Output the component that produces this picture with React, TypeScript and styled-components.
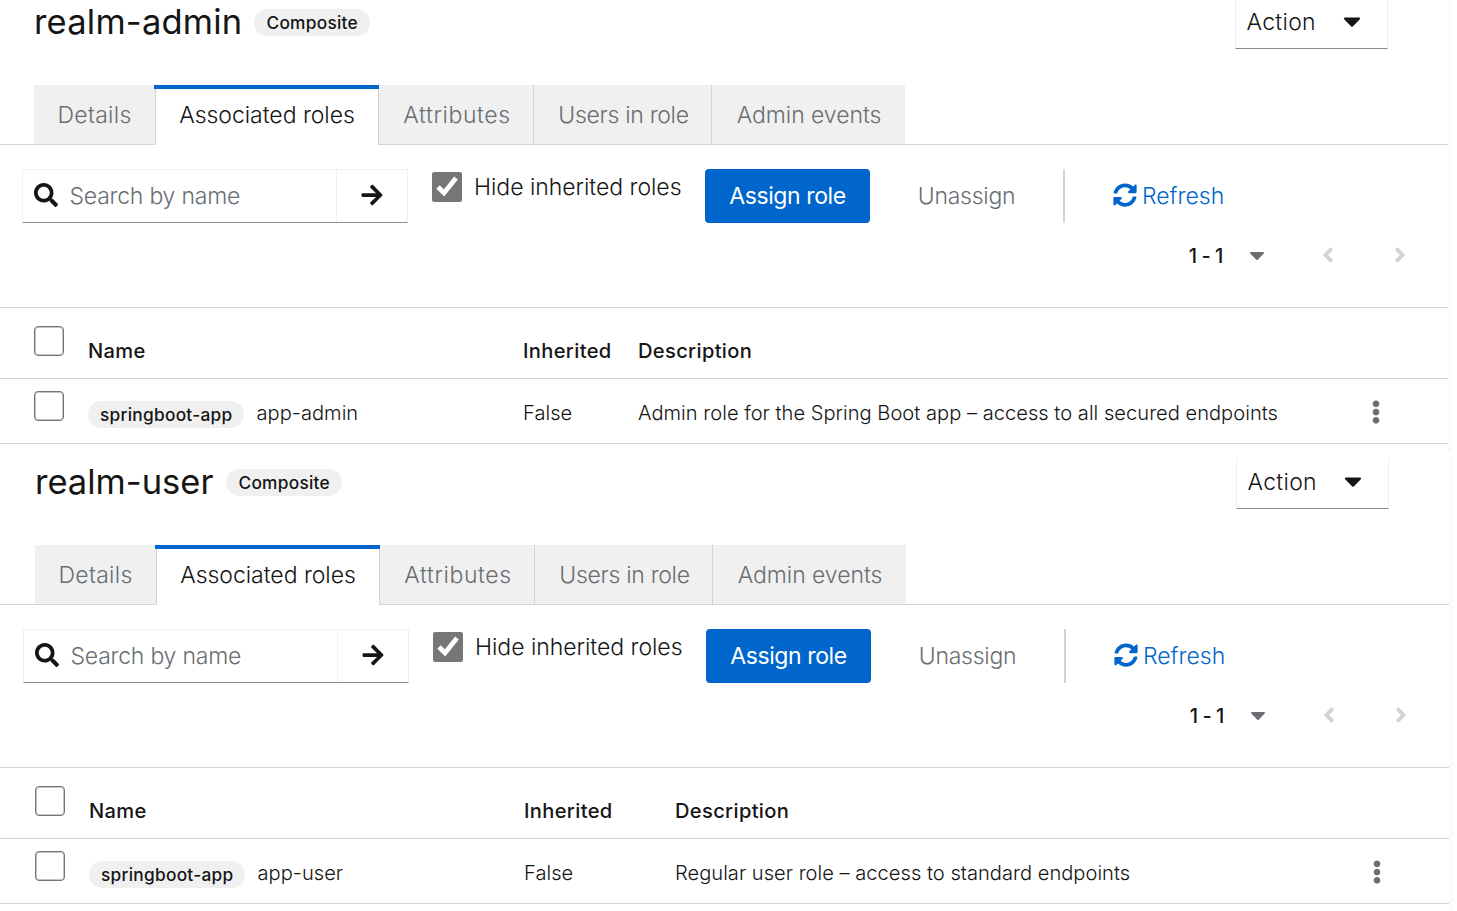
import React from "react";
import styled, { createGlobalStyle } from "styled-components";
import {
  FaAngleLeft,
  FaAngleRight,
  FaArrowRight,
  FaCaretDown,
  FaEllipsisV,
  FaSearch,
  FaSyncAlt,
} from "react-icons/fa";

const GlobalStyle = createGlobalStyle`
  *, *::before, *::after { box-sizing: border-box; }
  body {
    margin: 0;
    background: #fff;
    color: #151515;
    font-family: Inter, "Liberation Sans", sans-serif;
    font-size: 23px;
    font-weight: 300;
    overflow: hidden;
  }
  button {
    font: inherit;
    color: inherit;
    background: none;
    border: 0;
    padding: 0;
    margin: 0;
  }
  svg { display: block; flex: none; }
`;

const Page = styled.div`
  display: flex;
  flex-direction: column;
  gap: 6px;
  width: 1457px;
  height: 911px;
  overflow: hidden;
`;

const Panel = styled.section<{ $inset: number; $height: number }>`
  --inset: ${(p) => p.$inset}px;
  flex: none;
  width: ${(p) => 1452 + p.$inset}px;
  height: ${(p) => p.$height}px;
  border-right: 4px solid #fafafa;
  overflow: hidden;
`;

const Header = styled.header<{ $height: number }>`
  display: flex;
  align-items: flex-end;
  height: ${(p) => p.$height}px;
  padding: 0 60px 0 calc(34px + var(--inset));
  overflow: hidden;
`;

const Title = styled.h1<{ $width: number; $track: number }>`
  margin: 0;
  width: ${(p) => p.$width}px;
  font-size: 34.5px;
  font-weight: 400;
  line-height: 54px;
  letter-spacing: ${(p) => p.$track}px;
  white-space: nowrap;
`;

const Badge = styled.span<{ $width: number }>`
  display: flex;
  align-items: center;
  justify-content: center;
  flex: none;
  width: ${(p) => p.$width}px;
  height: 27px;
  padding-left: 0.5px;
  border-radius: 14px;
  background: #f0f0f0;
  font-size: 17.3px;
  font-weight: 500;
  letter-spacing: 0.27px;
  white-space: nowrap;
`;

const HeaderBadge = styled(Badge)`
  margin-bottom: 13px;
`;

const ActionToggle = styled.button`
  display: flex;
  align-items: center;
  justify-content: space-between;
  width: 153px;
  height: 54px;
  margin-left: auto;
  padding: 0 21px 0 10.5px;
  border: 1px solid #f0f0f0;
  border-bottom-color: #8a8d90;
  letter-spacing: 0.3px;

  svg { margin-bottom: 2px; }
`;

const TabBar = styled.nav`
  display: flex;
  height: 60px;
  margin-top: 36px;

  &::before {
    content: "";
    width: calc(34px + var(--inset));
    border-bottom: 1px solid #d2d2d2;
  }
  &::after {
    content: "";
    flex: 1;
    border-bottom: 1px solid #d2d2d2;
  }
`;

const Tab = styled.button<{
  $width: number;
  $track: number;
  $active?: boolean;
  $divided?: boolean;
}>`
  width: ${(p) => p.$width}px;
  height: 60px;
  padding: ${(p) => (p.$active ? "0 0 5px 1px" : "1px 0 0 1px")};
  color: ${(p) => (p.$active ? "#151515" : "#6a6e73")};
  background: ${(p) => (p.$active ? "#fff" : "#f0f0f0")};
  border-top: ${(p) => (p.$active ? "4px solid #06c" : "0")};
  border-bottom: ${(p) => (p.$active ? "0" : "1px solid #d2d2d2")};
  box-shadow: ${(p) =>
    p.$active
      ? "inset 1px 0 #f0f0f0, inset 2px 0 #d2d2d2, inset -1px 0 #d2d2d2"
      : p.$divided
      ? "inset -1px 0 #d2d2d2"
      : "none"};
  letter-spacing: ${(p) => p.$track}px;
  white-space: nowrap;
`;

const Toolbar = styled.div`
  display: flex;
  height: 78px;
  padding: 24px 0 0 calc(22px + var(--inset));
`;

const SearchGroup = styled.div`
  display: flex;
  width: 386px;
  height: 54px;
  border: 1px solid #f0f0f0;
  border-bottom-color: #8a8d90;

  svg { margin-bottom: 2px; }
`;

const SearchField = styled.label`
  display: flex;
  align-items: center;
  gap: 11.5px;
  width: 314px;
  padding-left: 11px;
  border-right: 1px solid #f0f0f0;
`;

const SearchInput = styled.input`
  width: 240px;
  padding: 0;
  border: 0;
  outline: 0;
  background: none;
  font: inherit;
  letter-spacing: -0.22px;

  &::placeholder {
    color: #6a6e73;
    opacity: 1;
  }
`;

const SearchSubmit = styled.button`
  display: flex;
  flex: 1;
  align-items: center;
  justify-content: center;
`;

const CheckLabel = styled.label`
  display: flex;
  align-items: center;
  gap: 12px;
  width: 273px;
  height: 30px;
  margin: 3px 0 0 24px;
  letter-spacing: -0.03px;
  white-space: nowrap;
`;

const Checkbox = styled.input.attrs({ type: "checkbox" })`
  flex: none;
  width: 30px;
  height: 30px;
  margin: 0;
  accent-color: #767676;

  &:not(:checked) {
    appearance: none;
    border: 1px solid #767676;
    border-radius: 4px;
    box-shadow: inset 0 0 0 1px #c4c4c4;
  }
`;

const PrimaryButton = styled.button`
  width: 165px;
  height: 54px;
  border-radius: 4px;
  background: #06c;
  color: #fff;
  font-weight: 400;
  letter-spacing: -0.4px;
`;

const PlainButton = styled.button`
  width: 193px;
  height: 54px;
  color: #6a6e73;
  letter-spacing: -0.25px;
`;

const Separator = styled.span`
  width: 2px;
  height: 54px;
  background: #d2d2d2;
`;

const LinkButton = styled.button`
  display: flex;
  align-items: center;
  gap: 5px;
  height: 54px;
  margin-left: 48px;
  color: #06c;

  svg { margin-bottom: 2px; }
`;

const Pagination = styled.div`
  display: flex;
  align-items: center;
  height: 84px;
  padding: 0 0 20px calc(1188px + var(--inset));

  > * { flex: none; }
`;

const PageRange = styled.span`
  width: 56.5px;
  padding: 1px 0 0 0.8px;
  font-size: 20px;
  font-weight: 500;
  letter-spacing: -0.5px;
  white-space: nowrap;
`;

const PageCaret = styled.span`
  width: 71.5px;
  color: #6a6e73;

  svg { margin-bottom: 1px; }
`;

const PageStep = styled.button`
  width: 71.5px;
  color: #d2d2d2;
`;

const Table = styled.div`
  border-top: 1px solid #d2d2d2;
`;

const TableRow = styled.div<{ $height: number; $inherited: number; $head?: boolean }>`
  display: grid;
  grid-template-columns: 54px 435px ${(p) => p.$inherited}px 1fr 88px;
  align-items: center;
  height: ${(p) => p.$height}px;
  padding-left: calc(34px + var(--inset));
  border-bottom: 1px solid #d2d2d2;
  font-size: 20.1px;
  font-weight: ${(p) => (p.$head ? 500 : 300)};
  letter-spacing: ${(p) => (p.$head ? 0.35 : 0.02)}px;
  white-space: nowrap;
`;

const CheckCell = styled.div<{ $top: number }>`
  display: flex;
  align-self: start;
  padding-top: ${(p) => p.$top}px;
`;

const HeadCell = styled.div`
  padding-top: 15px;
`;

const Cell = styled.div`
  padding-top: 4px;
`;

const NameCell = styled.div`
  display: flex;
  align-items: center;
  gap: 12.5px;
`;

const NameBadge = styled(Badge)`
  margin-top: 7px;
`;

const KebabButton = styled.button`
  display: flex;
  padding: 1px 0 0 4px;
  color: #6a6e73;
`;

interface RolePanelProps {
  name: string;
  titleWidth: number;
  titleTrack: number;
  role: string;
  description: string;
  inset: number;
  height: number;
  headerHeight: number;
  inheritedWidth: number;
}

function RolePanel(p: RolePanelProps) {
  return (
    <Panel $inset={p.inset} $height={p.height}>
      <Header $height={p.headerHeight}>
        <Title $width={p.titleWidth} $track={p.titleTrack}>{p.name}</Title>
        <HeaderBadge $width={116}>Composite</HeaderBadge>
        <ActionToggle>
          Action
          <FaCaretDown size={28} />
        </ActionToggle>
      </Header>
      <TabBar>
        <Tab $width={120} $track={0.28}>Details</Tab>
        <Tab $width={225} $track={-0.03} $active>Associated roles</Tab>
        <Tab $width={155} $track={0.6} $divided>Attributes</Tab>
        <Tab $width={178} $track={-0.3} $divided>Users in role</Tab>
        <Tab $width={193} $track={-0.05}>Admin events</Tab>
      </TabBar>
      <Toolbar>
        <SearchGroup>
          <SearchField>
            <FaSearch size={24} />
            <SearchInput placeholder="Search by name" />
          </SearchField>
          <SearchSubmit>
            <FaArrowRight size={24} />
          </SearchSubmit>
        </SearchGroup>
        <CheckLabel>
          <Checkbox defaultChecked />
          Hide inherited roles
        </CheckLabel>
        <PrimaryButton>Assign role</PrimaryButton>
        <PlainButton>Unassign</PlainButton>
        <Separator />
        <LinkButton>
          <FaSyncAlt size={24} />
          Refresh
        </LinkButton>
      </Toolbar>
      <Pagination>
        <PageRange>1 - 1</PageRange>
        <PageCaret><FaCaretDown size={24} /></PageCaret>
        <PageStep><FaAngleLeft size={24} /></PageStep>
        <PageStep><FaAngleRight size={24} /></PageStep>
      </Pagination>
      <Table>
        <TableRow $head $height={71} $inherited={p.inheritedWidth}>
          <CheckCell $top={18}><Checkbox /></CheckCell>
          <HeadCell>Name</HeadCell>
          <HeadCell>Inherited</HeadCell>
          <HeadCell>Description</HeadCell>
        </TableRow>
        <TableRow $height={65} $inherited={p.inheritedWidth}>
          <CheckCell $top={12}><Checkbox /></CheckCell>
          <NameCell>
            <NameBadge $width={156}>springboot-app</NameBadge>
            <Cell>{p.role}</Cell>
          </NameCell>
          <Cell>False</Cell>
          <Cell>{p.description}</Cell>
          <KebabButton><FaEllipsisV size={24} /></KebabButton>
        </TableRow>
      </Table>
    </Panel>
  );
}

export default function App() {
  return (
    <>
      <GlobalStyle />
      <Page>
        <RolePanel
          name="realm-admin"
          titleWidth={220}
          titleTrack={0.2}
          role="app-admin"
          description="Admin role for the Spring Boot app – access to all secured endpoints"
          inset={0}
          height={451}
          headerHeight={49}
          inheritedWidth={115}
        />
        <RolePanel
          name="realm-user"
          titleWidth={191}
          titleTrack={0}
          role="app-user"
          description="Regular user role – access to standard endpoints"
          inset={1}
          height={454}
          headerHeight={52}
          inheritedWidth={151}
        />
      </Page>
    </>
  );
}
